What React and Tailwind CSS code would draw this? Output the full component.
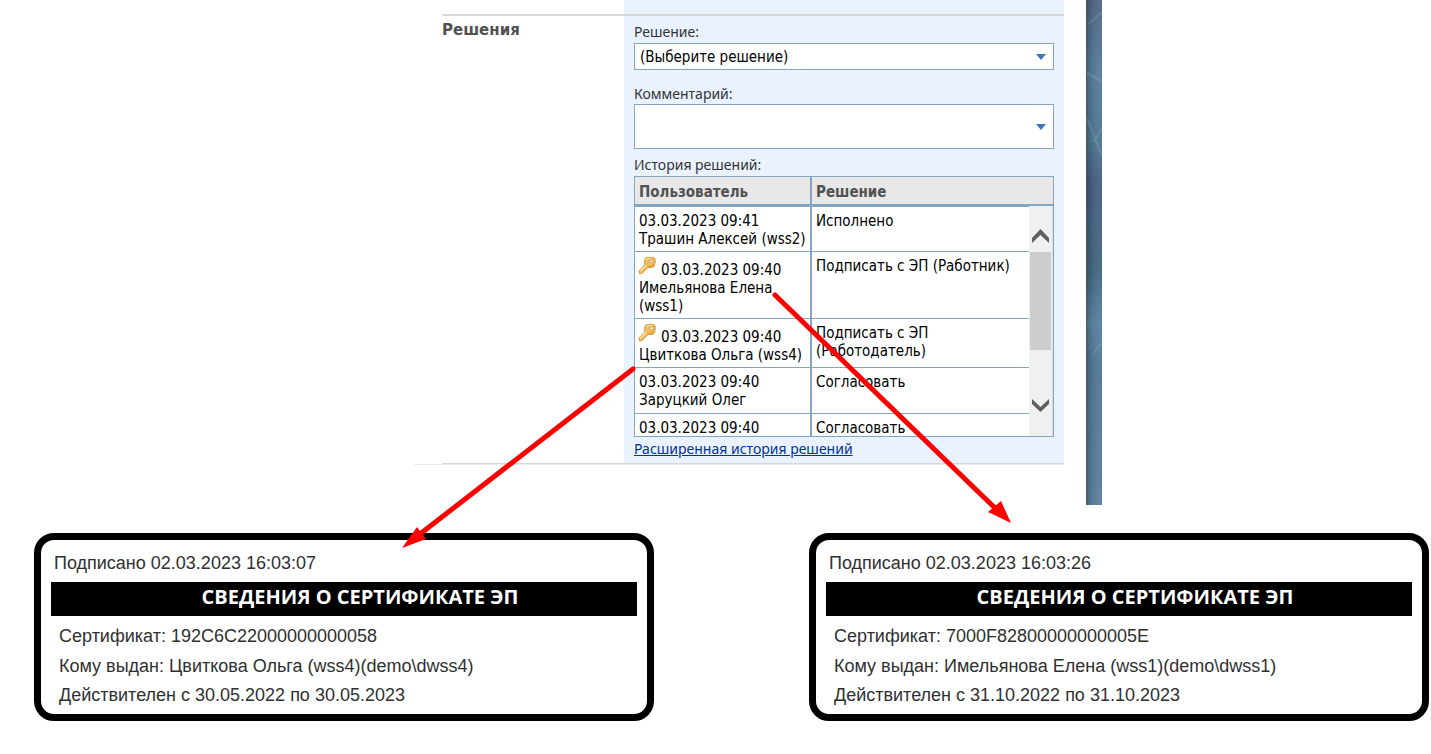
import { useState } from "react"

const HISTORY = [
  { id: 1, date: "03.03.2023 09:41", user: "Трашин Алексей (wss2)", decision: "Исполнено", signed: false, height: "h-[46px]" },
  { id: 2, date: "03.03.2023 09:40", user: "Имельянова Елена (wss1)", decision: "Подписать с ЭП (Работник)", signed: true, height: "h-[67px]" },
  { id: 3, date: "03.03.2023 09:40", user: "Цвиткова Ольга (wss4)", decision: "Подписать с ЭП (Работодатель)", signed: true, height: "h-[49px]" },
  { id: 4, date: "03.03.2023 09:40", user: "Заруцкий Олег", decision: "Согласовать", signed: false, height: "h-[46px]" },
  { id: 5, date: "03.03.2023 09:40", user: "", decision: "Согласовать", signed: false, height: "h-[24px]" },
]

const CERTIFICATES = [
  {
    signedAt: "02.03.2023 16:03:07",
    serial: "192C6C22000000000058",
    owner: "Цвиткова Ольга (wss4)(demo\\dwss4)",
    from: "30.05.2022",
    to: "30.05.2023",
  },
  {
    signedAt: "02.03.2023 16:03:26",
    serial: "7000F82800000000005E",
    owner: "Имельянова Елена (wss1)(demo\\dwss1)",
    from: "31.10.2022",
    to: "31.10.2023",
  },
]

function KeyIcon() {
  return (
    <svg viewBox="0 0 20 20" className="mr-1 -ml-px inline h-[18px] w-[19px] overflow-visible align-baseline" aria-hidden="true">
      <path
        d="M7.6 1.6 L10 0.4 L16.2 0.4 Q18.8 1 18.8 4 L18 9 Q17 11.8 14 11.8 L10.8 11.6 L9 13.4 L7.4 13.6 L7.2 15.2 L5.6 15.6 L5 17.6 L1.2 18.8 L0.6 15.4 L7 8.8 Q6.2 4.2 7.6 1.6 Z"
        fill="#f5bf58"
        stroke="#cf9138"
        strokeWidth="1"
        strokeLinejoin="round"
      />
      <path d="M8.8 3.4 L10.6 1.8 H15 M2 15.6 L8.6 9.2" stroke="#fde3a0" strokeWidth="1.6" fill="none" />
      <path d="M10 10.2 L14.6 10.4 Q16.4 9.8 16.8 7.6" stroke="#e09c35" strokeWidth="1.4" fill="none" />
      <circle cx="14.4" cy="4.6" r="1.8" fill="#fff" stroke="#b57a2a" strokeWidth="0.8" />
    </svg>
  )
}

function DropArrow() {
  return (
    <svg viewBox="0 0 12 6" className="pointer-events-none absolute top-1/2 right-[7px] h-[6px] w-[12px] -translate-y-1/2" aria-hidden="true">
      <path d="M1 0 H11 L6 6 Z" fill="#3f74b8" />
    </svg>
  )
}

function ScrollBar() {
  return (
    <div className="absolute top-[29px] right-0 bottom-0 flex w-6 flex-col border-r border-[#d3e0ee] bg-[#f0f0f0]" aria-hidden="true">
      <svg viewBox="0 0 23 46" className="h-[46px] w-[23px]">
        <path d="M3 32 L11.5 23 L20 32 V37 L11.5 29 L3 37 Z" fill="#606060" />
      </svg>
      <div className="mx-px h-[98px] bg-[#cdcdcd]" />
      <svg viewBox="0 0 23 86" className="h-[86px] w-[23px]">
        <path d="M3 49 L11.5 57 L20 49 V54 L11.5 62 L3 54 Z" fill="#606060" />
      </svg>
    </div>
  )
}

function HistoryTable() {
  return (
    <div className="relative h-[261px] overflow-hidden border border-[#86a5c1] bg-white font-['DejaVu_Sans_Condensed','DejaVu_Sans',sans-serif] text-[15px]">
      <table className="w-full table-fixed border-collapse text-left leading-[18px] text-black">
        <colgroup>
          <col className="w-[176px]" />
          <col />
        </colgroup>
        <thead>
          <tr className="h-[28px] border-b-[3px] border-[#86a5c1] bg-[#e8e8e8] text-[#525252]">
            <th className="border-r-2 border-[#86a5c1] px-1 pt-[3px] font-bold">Пользователь</th>
            <th className="px-1 pt-[3px] font-bold">Решение</th>
          </tr>
        </thead>
        <tbody>
          {HISTORY.map((row) => (
            <tr key={row.id} className={`${row.height} border-b border-[#86a5c1] align-top`}>
              <td className="border-r-2 border-[#86a5c1] pt-[5px] pl-1">
                {row.signed && <KeyIcon />}
                {row.date}
                {row.user && <br />}
                {row.user}
              </td>
              <td className="pt-[5px] pr-8 pl-1">{row.decision}</td>
            </tr>
          ))}
        </tbody>
      </table>
      <ScrollBar />
    </div>
  )
}

function CertificateCard({ cert }) {
  return (
    <section className="rounded-[20px] border-[7px] border-black bg-white px-[10px] pt-2 pb-1 font-['Liberation_Sans',sans-serif] text-[18px] leading-[30px] text-[#303030]">
      <p className="pl-[3px]">Подписано {cert.signedAt}</p>
      <h2 className="mt-1 mb-[5px] bg-black pb-1 pl-8 text-center font-['Open_Sans',sans-serif] text-[20px] font-bold text-white">
        СВЕДЕНИЯ О СЕРТИФИКАТЕ ЭП
      </h2>
      <div className="pl-2">
        <p>Сертификат: {cert.serial}</p>
        <p>Кому выдан: {cert.owner}</p>
        <p className="leading-[29px]">Действителен с {cert.from} по {cert.to}</p>
      </div>
    </section>
  )
}

function Wallpaper() {
  return (
    <div className="ml-[22px] w-4 border-l border-[#555]">
      <svg viewBox="0 0 15 505" preserveAspectRatio="none" className="h-full w-full" aria-hidden="true">
        <defs>
          <linearGradient id="sky" x1="0" y1="0" x2="0" y2="1">
            <stop offset="0" stopColor="#4c6584" />
            <stop offset="0.15" stopColor="#547c9c" />
            <stop offset="0.28" stopColor="#4b7590" />
            <stop offset="0.36" stopColor="#435d80" />
            <stop offset="0.54" stopColor="#3f6680" />
            <stop offset="0.64" stopColor="#5582a3" />
            <stop offset="0.72" stopColor="#4d7694" />
            <stop offset="1" stopColor="#587d9d" />
          </linearGradient>
          <linearGradient id="edge" x1="0" y1="0" x2="1" y2="0">
            <stop offset="0" stopColor="#000" stopOpacity="0.2" />
            <stop offset="1" stopColor="#fff" stopOpacity="0.05" />
          </linearGradient>
        </defs>
        <rect width="15" height="505" fill="url(#sky)" />
        <rect width="15" height="505" fill="url(#edge)" />
        <g stroke="#a9c6da" strokeWidth="2" opacity="0.2" fill="none">
          <path d="M0 25 L15 12 M0 73 L15 81 M0 118 L15 156 M7 142 L15 128 M6 354 L15 342" />
        </g>
      </svg>
    </div>
  )
}

function Arrows() {
  return (
    <svg className="pointer-events-none absolute top-0 left-0 h-[754px] w-[1431px]" viewBox="0 0 1431 754" aria-hidden="true">
      <g stroke="#ff0000" strokeWidth="5" strokeLinecap="round">
        <path d="M633 369 L420 534" />
        <path d="M775 295 L996 509" />
      </g>
      <path d="M402 548 L417 527 L426 539 Z" fill="#ff0000" />
      <path d="M1011 523 L1001 501 L988 512 Z" fill="#ff0000" />
    </svg>
  )
}

export default function App() {
  const [decision, setDecision] = useState("")
  const [comment, setComment] = useState("")

  return (
    <main className="relative min-h-screen bg-white font-['Noto_Sans',sans-serif] text-[14px] text-[#333]">
      <div className="flex h-[505px] pr-[329px] pl-[442px]">
        <form className="flex-1">
          <div className="ml-[182px] h-[14px] bg-[#eaf2ff]" />
          <div className="flex border-t-2 border-[#d8d8d8]">
            <h1 className="w-[182px] pt-1 font-['DejaVu_Sans',sans-serif] text-[15px] leading-5 font-bold text-[#525252]">Решения</h1>
            <div className="h-[447px] flex-1 bg-[#eaf2ff] px-[10px] pt-[6px] leading-5">
              <label htmlFor="decision" className="block">Решение:</label>
              <div className="relative mt-px">
                <select
                  id="decision"
                  value={decision}
                  onChange={(e) => setDecision(e.target.value)}
                  className="block h-[27px] w-full appearance-none border border-[#86a5c1] bg-white pl-[5px] font-['DejaVu_Sans_Condensed','DejaVu_Sans',sans-serif] text-[15px] text-black"
                >
                  <option value="">(Выберите решение)</option>
                </select>
                <DropArrow />
              </div>
              <label htmlFor="comment" className="mt-[14px] block">Комментарий:</label>
              <div className="relative">
                <textarea
                  id="comment"
                  value={comment}
                  onChange={(e) => setComment(e.target.value)}
                  className="block h-[45px] w-full resize-none border border-[#86a5c1] bg-white px-[5px] text-black"
                />
                <DropArrow />
              </div>
              <p className="mt-[6px] mb-px">История решений:</p>
              <HistoryTable />
              <a href="#history" className="mt-[2px] inline-block text-[#003399] underline">Расширенная история решений</a>
            </div>
          </div>
          <div className="border-t border-[#d6d6d6]" />
          <div className="-ml-7 border-t border-[#ececec]" />
        </form>
        <Wallpaper />
      </div>
      <div className="grid grid-cols-2 gap-[155px] pt-7 pr-[2px] pl-[34px]">
        {CERTIFICATES.map((cert) => (
          <CertificateCard key={cert.serial} cert={cert} />
        ))}
      </div>
      <Arrows />
    </main>
  )
}
